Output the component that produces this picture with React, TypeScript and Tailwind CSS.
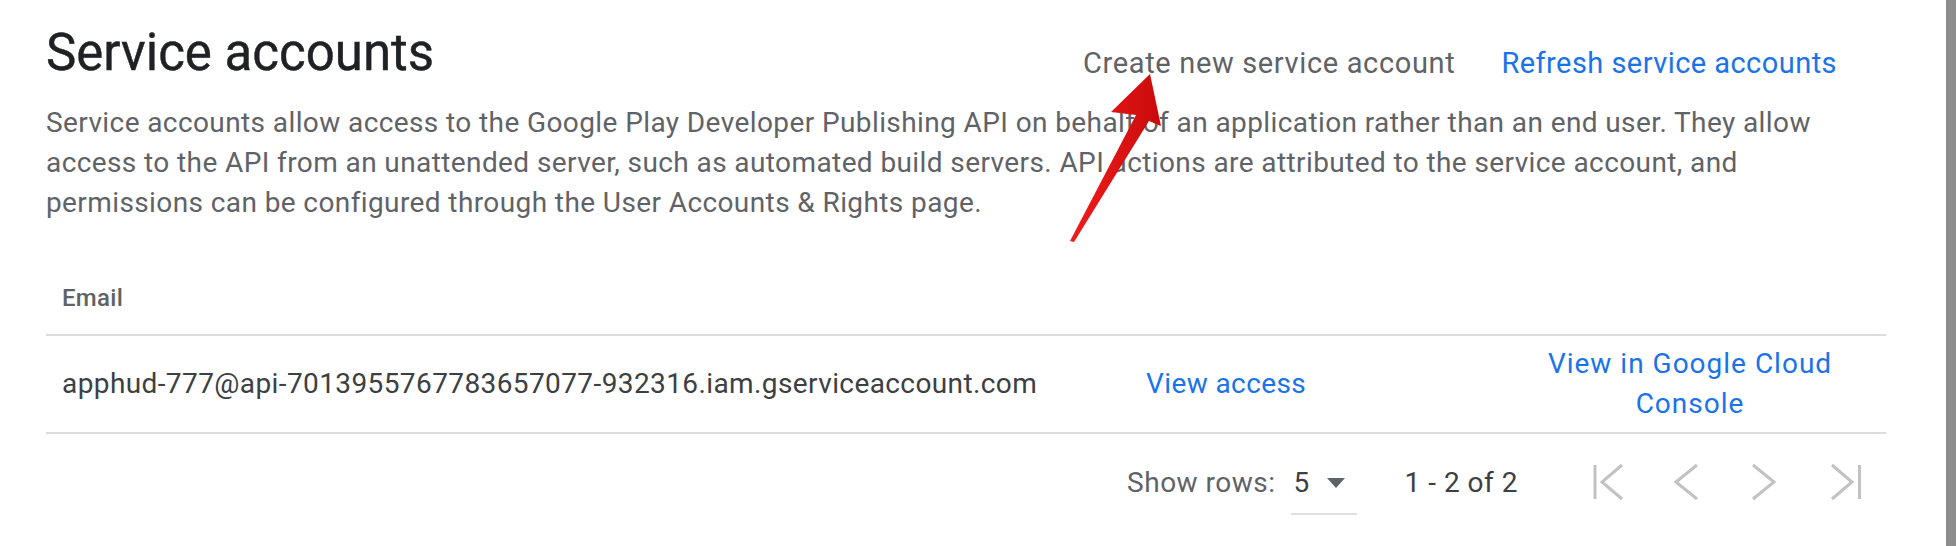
import type { ReactNode } from "react";

function PagerIcon({ children }: { children: ReactNode }) {
  return (
    <svg width="48" height="48" viewBox="0 0 48 48" fill="none" stroke="#c2c2c2" strokeWidth="3">
      {children}
    </svg>
  );
}

function Arrow() {
  // red annotation arrow pointing at "Create new service account"
  return (
    <svg className="pointer-events-none absolute inset-0" width="1956" height="546" viewBox="0 0 1956 546">
      <defs>
        <linearGradient id="arrowFill" x1="0" y1="0" x2="1" y2="0">
          <stop offset="0" stopColor="#f21c1c" />
          <stop offset="1" stopColor="#c90b0b" />
        </linearGradient>
      </defs>
      <polygon
        points="1150,74 1161,126 1149,121 1074,242 1070,241 1136,115 1111,112"
        fill="url(#arrowFill)"
      />
    </svg>
  );
}

export default function App() {
  return (
    <div className="relative flex h-[546px] w-[1956px] overflow-hidden bg-white font-['Roboto',sans-serif]">
      <main className="flex-1 pl-[46px] pr-[60px]">
        <header className="flex items-start justify-between pt-[23px]">
          <h1 className="text-[51px] leading-[60px] font-normal text-[#202124] [-webkit-text-stroke:0.4px_#202124]">
            Service accounts
          </h1>
          <div className="mr-[49px] mt-[20px] flex items-center gap-[46px] text-[29px] leading-[40px] font-normal">
            <button className="tracking-[0.65px] text-[#5f6368]">Create new service account</button>
            <button className="tracking-[0.45px] text-[#1a73e8]">Refresh service accounts</button>
          </div>
        </header>

        <p className="mt-[20px] text-[28px] leading-[40px] tracking-[0.4px] text-[#5f6368]">
          <span className="block whitespace-nowrap">
            Service accounts allow access to the Google Play Developer Publishing API on behalf of an application rather than an end user. They allow
          </span>
          <span className="block whitespace-nowrap">
            access to the API from an unattended server, such as automated build servers. API actions are attributed to the service account, and
          </span>
          <span className="block whitespace-nowrap">
            permissions can be configured through the User Accounts &amp; Rights page.
          </span>
        </p>

        <div className="grid grid-cols-[1084px_364px_1fr] border-b-2 border-[#dadce0] pt-[59px] pb-[20px]">
          <div className="pl-[16px] text-[24px] leading-[32px] font-medium tracking-[0.3px] text-[#5f6368]">Email</div>
        </div>

        <div className="grid h-[98px] grid-cols-[1084px_364px_1fr] items-center border-b-2 border-[#dadce0] text-[28px] leading-[40px] tracking-[0.4px]">
          <div className="whitespace-nowrap pl-[16px] text-[#3c4043]">
            apphud-777@api-7013955767783657077-932316.iam.gserviceaccount.com
          </div>
          <div className="pl-[16px] text-[#1a73e8]">View access</div>
          <div className="text-center tracking-[1px] text-[#1a73e8]">
            View in Google Cloud
            <br />
            Console
          </div>
        </div>

        <footer className="flex h-[98px] items-center justify-end pr-[16px] text-[28px] leading-[40px] tracking-[0.5px] text-[#5f6368]">
          <span>Show rows:</span>
          <div className="ml-[15px] flex w-[66px] items-center border-b-2 border-[#e0e0e0] pt-[12px] pb-[10px] pl-[3px]">
            <span className="text-[#3c4043]">5</span>
            <svg className="ml-[17px]" width="18" height="10" viewBox="0 0 18 10">
              <polygon points="0,0 18,0 9,10" fill="#5f6368" />
            </svg>
          </div>
          <span className="ml-[48px] text-[#3c4043]">1 - 2 of 2</span>
          <div className="ml-[66px] flex items-center">
            <PagerIcon>
              <path d="M11 6v34" />
              <path d="M38 6 L18 23 L38 40" />
            </PagerIcon>
            <div className="ml-[30px]">
              <PagerIcon>
                <path d="M35 6 L14 23 L35 40" />
              </PagerIcon>
            </div>
            <div className="ml-[29px]">
              <PagerIcon>
                <path d="M14 6 L35 23 L14 40" />
              </PagerIcon>
            </div>
            <div className="ml-[35px]">
              <PagerIcon>
                <path d="M10 6 L30 23 L10 40" />
                <path d="M37.5 6v34" />
              </PagerIcon>
            </div>
          </div>
        </footer>
      </main>
      <aside className="w-[10px] shrink-0 bg-[#8c8c8c]" />
      <Arrow />
    </div>
  );
}
